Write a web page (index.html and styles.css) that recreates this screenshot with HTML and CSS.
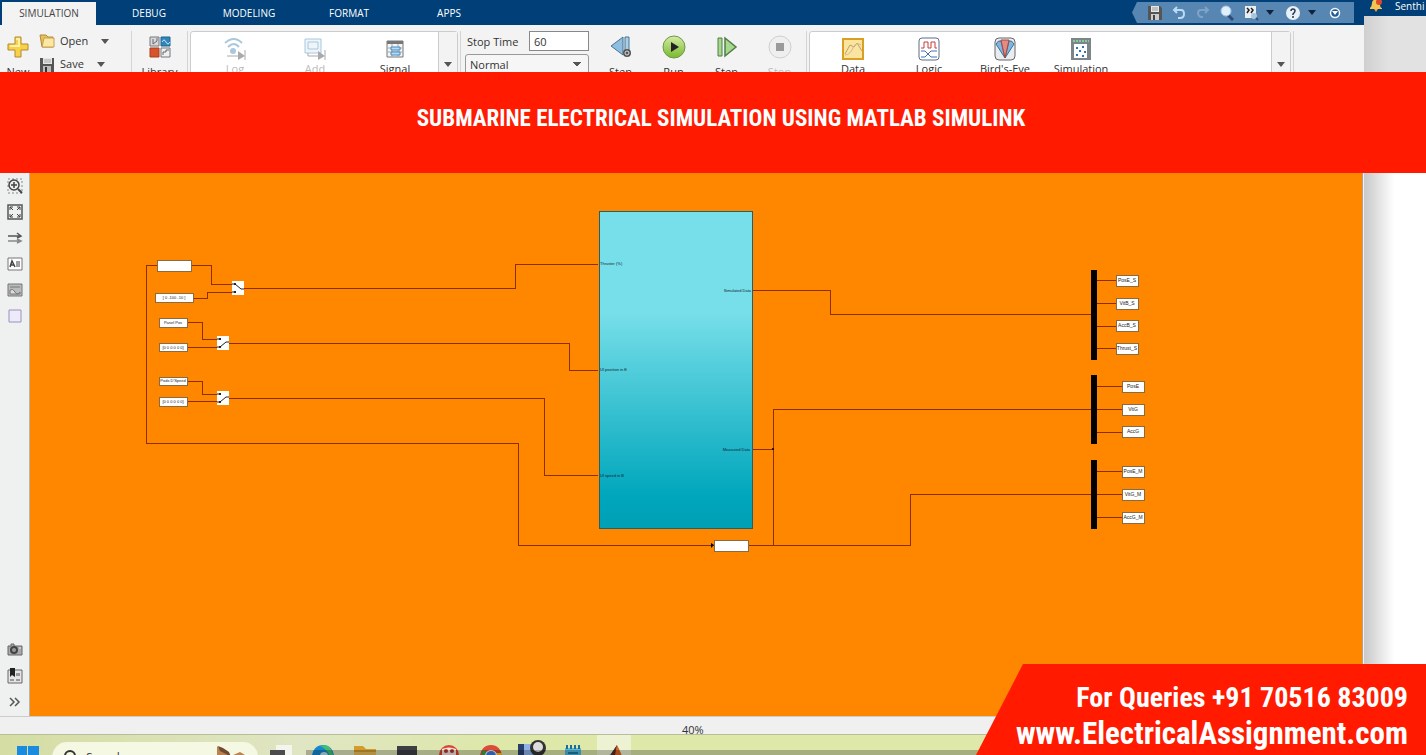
FILE: index.html
```html
<!DOCTYPE html>
<html lang="en">
<head>
  <meta charset="UTF-8" />
  <meta name="viewport" content="width=device-width, initial-scale=1.0"/>
  <title>Submarine Electrical Simulation</title>
  <link rel="stylesheet" href="styles.css">
</head>
<body>

  <div class="desktop">
    <div class="app-window">

      <!-- Ribbon tabs -->
      <header class="tab-bar">
        <nav class="tabs">
          <button class="tab active">SIMULATION</button>
          <button class="tab">DEBUG</button>
          <button class="tab">MODELING</button>
          <button class="tab">FORMAT</button>
          <button class="tab">APPS</button>
        </nav>
        <div class="quick-access">
          <button aria-label="Save"><svg width="16" height="16" viewBox="0 0 16 16"><path d="M1 1h12l2 2v12H1z" fill="#555"/><path d="M4 1h8v6H4z" fill="#e8e8e8"/><path d="M5 3h6M5 5h6" stroke="#999"/><path d="M4 9h8v6H4z" fill="#ccc"/><path d="M6 10h2v5H6z" fill="#444"/></svg></button>
          <button aria-label="Undo"><svg width="16" height="16" viewBox="0 0 16 16" fill="none" stroke="#b9dcf5" stroke-width="2"><path d="M6 2L3 5l3 3M3 5h7q3 0 3 4t-4 4H7"/></svg></button>
          <button aria-label="Redo"><svg width="16" height="16" viewBox="0 0 16 16" fill="none" stroke="#7fa3c4" stroke-width="2"><path d="M10 2l3 3-3 3M13 5H6Q3 5 3 8t3 4h2"/></svg></button>
          <button aria-label="Find"><svg width="16" height="16" viewBox="0 0 16 16"><path d="M9 10l5 5" stroke="#2b4d77" stroke-width="3"/><circle cx="7" cy="6" r="5" fill="#dff0fc" stroke="#9cc4e4"/></svg></button>
          <button aria-label="Favorites"><svg width="16" height="16" viewBox="0 0 16 16"><path d="M2 1h11v12H2z" fill="#e9eef2"/><path d="M4 3l2 2-2 3M8 3l2 2-2 3" fill="none" stroke="#222" stroke-width="1.5"/><circle cx="11" cy="11" r="3" fill="#a9c6de"/><path d="M13 13l2 2" stroke="#33557d" stroke-width="2"/></svg></button>
          <span class="caret dark"></span>
          <button aria-label="Help"><svg width="16" height="16" viewBox="0 0 16 16"><circle cx="8" cy="8" r="7" fill="#e9f1f8"/><path d="M6 6q0-2 2-2t2 2q0 1-2 3v1M8 11v2" fill="none" stroke="#223a55" stroke-width="1.5"/></svg></button>
          <span class="caret dark"></span>
          <button aria-label="Minimize ribbon"><svg width="16" height="16" viewBox="0 0 16 16"><circle cx="8" cy="8" r="4.5" fill="#235a90" stroke="#eef6fc" stroke-width="1.5"/><path d="M5 6h6l-3 4z" fill="#fff"/></svg></button>
        </div>
      </header>

      <!-- Toolstrip -->
      <div class="toolstrip">
        <div class="file-group">
          <button class="tool new-tool">
            <svg width="22" height="22" viewBox="0 0 22 22"><path d="M8 1h6v7h7v6h-7v7H8v-7H1V8h7z" fill="#f8d04a" stroke="#b18a2a"/><path d="M9 3h3v7H3" fill="none" stroke="#fff0a8" stroke-width="2"/></svg>
            <span>New</span>
          </button>
          <div class="file-actions">
            <button class="file-action">
              <svg width="16" height="14" viewBox="0 0 16 14"><path d="M1 1h6l2 2h5v10H3z" fill="#e7c05b" stroke="#b48a35"/><path d="M5 4h10v9H3z" fill="#fbe8a5" stroke="#c7a04d"/></svg>
              <span>Open</span><i class="caret"></i>
            </button>
            <button class="file-action">
              <svg width="16" height="15" viewBox="0 0 16 15"><path d="M1 1h14v14H1z" fill="#555"/><path d="M4 1h9v6H4z" fill="#e6e6e6"/><path d="M5 3h7M5 5h7" stroke="#aaa"/><path d="M4 9h8v6H4z" fill="#bbb"/><path d="M6 10h2v5H6z" fill="#333"/></svg>
              <span>Save</span><i class="caret"></i>
            </button>
          </div>
        </div>

        <div class="library-group">
          <button class="tool">
            <svg width="22" height="22" viewBox="0 0 22 22"><path d="M1 1h9v9H1z" fill="#d7dadd" stroke="#777"/><path d="M4 3v5M4 8l4-3V2" stroke="#666" fill="none"/><path d="M12 1h9v9h-9z" fill="#2f86bd" stroke="#24658f"/><path d="M13 6q2-4 4 0t4 0" stroke="#c9e7fa" fill="none"/><path d="M1 12h9v9H1z" fill="#d6532c" stroke="#a8401f"/><path d="M12 12h9v9h-9z" fill="#eef0f2" stroke="#777"/><path d="M14 19v-3h3v-2h3" stroke="#666" fill="none"/></svg>
            <span>Library</span>
          </button>
        </div>

        <div class="gallery prepare">
          <button class="tool" disabled>
            <svg width="24" height="24" viewBox="0 0 24 24" fill="none" stroke="#a9c8dc" stroke-width="2"><path d="M2 6q9-8 17 0M5 10q6-6 11 0"/><circle cx="10" cy="14" r="3" fill="#a9c8dc" stroke="none"/><path d="M4 19h13M22 13v10" stroke="#aaa" stroke-width="1"/><path d="M15 14l7 5-7 4z" fill="#aaa" stroke="none"/></svg>
            <span>Log</span>
          </button>
          <button class="tool" disabled>
            <svg width="24" height="24" viewBox="0 0 24 24" fill="none" stroke="#a9c8dc"><path d="M2 2h16v14H2z" fill="#eef5fa"/><path d="M5 5h10v7H5z"/><path d="M5 16v3h11M22 13v10" stroke="#aaa"/><path d="M15 14l7 5-7 4z" fill="#aaa" stroke="none"/></svg>
            <span>Add</span>
          </button>
          <button class="tool">
            <svg width="24" height="24" viewBox="0 0 24 24"><path d="M4 4h16v16H4z" fill="#f5f5f5" stroke="#777"/><path d="M4 4h16v3H4z" fill="#777"/><path d="M4 11h16M4 15h16M9 7v13M15 7v13" stroke="#aaa"/><path d="M8 10h9v3H8zM8 15h9v3H8z" fill="#b9dcf5" stroke="#4489bd"/></svg>
            <span>Signal</span>
          </button>
          <button class="gallery-more" aria-label="More prepare tools"><i class="caret"></i></button>
        </div>

        <div class="simulate-group">
          <div class="sim-settings">
            <div class="stop-time">
              <label for="stop-time">Stop Time</label>
              <input type="text" id="stop-time" value="60">
            </div>
            <select id="sim-mode" aria-label="Simulation mode">
              <option>Normal</option>
            </select>
          </div>
          <button class="tool">
            <svg width="24" height="24" viewBox="0 0 24 24"><path d="M14 2v18L2 11z" fill="#8dbde0" stroke="#4a7391"/><path d="M16 2h4v16h-4z" fill="#a9cfe9" stroke="#4a7391"/><circle cx="18" cy="18" r="4" fill="#555"/><circle cx="18" cy="18" r="2" fill="none" stroke="#ddd"/></svg>
            <span>Step</span>
          </button>
          <button class="tool">
            <svg width="24" height="24" viewBox="0 0 24 24"><defs><linearGradient id="run-green" x2="0" y2="1"><stop stop-color="#d5eca6"/><stop offset="1" stop-color="#78b82e"/></linearGradient></defs><circle cx="12" cy="12" r="11" fill="url(#run-green)" stroke="#6f9843"/><path d="M9 7l8 5-8 5z" fill="#222"/></svg>
            <span>Run</span>
          </button>
          <button class="tool">
            <svg width="24" height="24" viewBox="0 0 24 24" fill="#a6d890" stroke="#527d45"><path d="M3 3h4v18H3z"/><path d="M10 3v18l11-9z" stroke-width="1.5"/></svg>
            <span>Step</span>
          </button>
          <button class="tool" disabled>
            <svg width="24" height="24" viewBox="0 0 24 24"><circle cx="12" cy="12" r="11" fill="#efefef" stroke="#cfcfcf"/><path d="M8 8h8v8H8z" fill="#9a9a9a"/></svg>
            <span>Stop</span>
          </button>
        </div>

        <div class="gallery review">
          <button class="tool">
            <svg width="24" height="24" viewBox="0 0 24 24"><path d="M2 2h20v20H2z" fill="#fbe3a0" stroke="#d9a022" stroke-width="2"/><path d="M4 17l5-9 4 2 3-4 5 8" fill="none" stroke="#c1a262"/><path d="M4 18q5 0 8-7t8-3" fill="none" stroke="#cdbb92"/></svg>
            <span>Data</span>
          </button>
          <button class="tool">
            <svg width="24" height="24" viewBox="0 0 24 24" fill="none"><rect x="2" y="1" width="20" height="22" rx="3" fill="#fff" stroke="#5c6c8c"/><path d="M4 11h3V5h4v6h3V5h4v6h2" stroke="#c83a3a"/><path d="M4 14h4l6 6h6M4 20h4l6-6h6" stroke="#4072b5"/></svg>
            <span>Logic</span>
          </button>
          <button class="tool">
            <svg width="24" height="24" viewBox="0 0 24 24"><rect x="2" y="1" width="20" height="22" rx="4" fill="#e9edf0" stroke="#666"/><path d="M12 21L3 7q2-4 5-3zM12 21l9-14q-2-4-5-3z" fill="#7fb6dd" stroke="#3d6f96"/><path d="M12 21L8 3h8z" fill="#e58b83" stroke="#a9473f"/></svg>
            <span>Bird's-Eye</span>
          </button>
          <button class="tool">
            <svg width="24" height="24" viewBox="0 0 24 24"><path d="M2 1h20v22H2z" fill="#7d8589"/><path d="M5 7h13v14H5z" fill="#fff"/><path d="M4 4h16" stroke="#7fd09a" stroke-width="2" stroke-dasharray="2 1"/><path d="M7 10h2v2H7zM13 9h2v2h-2zM10 13h2v2h-2zM15 14h2v2h-2zM7 17h2v2H7zM13 18h2v2h-2z" fill="#2e75b8"/></svg>
            <span>Simulation</span>
          </button>
          <button class="gallery-more" aria-label="More result tools"><i class="caret"></i></button>
        </div>
        <div class="strip-end"></div>
      </div>

      <!-- Palette and model canvas -->
      <main class="workspace">
        <aside class="palette">
          <button aria-label="Zoom"><svg width="16" height="16" viewBox="0 0 16 16" fill="none" stroke="#444"><path d="M1 1h14v14H1z" stroke="#888" stroke-dasharray="2 2"/><circle cx="7" cy="7" r="5" fill="#eee" stroke-width="1.5"/><path d="M11 11l4 4" stroke-width="2"/><path d="M4 7h6M7 4v6" stroke-width="1.5"/></svg></button>
          <button aria-label="Fit to view"><svg width="16" height="16" viewBox="0 0 16 16" fill="none" stroke="#444"><path d="M1 1h14v14H1z" stroke="#555" stroke-width="1.5"/><path d="M3 6V3h3M10 3h3v3M13 10v3h-3M6 13H3v-3M3 3l3 3M13 3l-3 3M13 13l-3-3M3 13l3-3"/></svg></button>
          <button aria-label="Signal routing"><svg width="16" height="16" viewBox="0 0 16 16" fill="none" stroke="#555" stroke-width="1.5"><path d="M1 6h12M10 3l4 3-4 2"/><path d="M1 11h12M10 9l4 2-4 2" stroke="#888"/></svg></button>
          <button aria-label="Annotation"><svg width="16" height="16" viewBox="0 0 16 16" fill="none" stroke="#444"><path d="M1 2h14v12H1z" fill="#fff" stroke="#777"/><path d="M3 11l2-6 3 6M4 9h3" stroke-width="1.5"/><path d="M9 6h4M9 8h4M9 10h4"/></svg></button>
          <button aria-label="Image"><svg width="16" height="16" viewBox="0 0 16 16"><path d="M1 2h14v12H1z" fill="#bbb" stroke="#777"/><path d="M3 5h10" stroke="#777"/><path d="M3 8q3-2 5 2t5 0v2H3z" fill="#ddd" stroke="#777"/></svg></button>
          <button aria-label="Area"><svg width="16" height="16" viewBox="0 0 16 16"><path d="M2 2h12v12H2z" fill="#edeafa" stroke="#9a90c0"/></svg></button>
          <button class="palette-bottom" aria-label="Screenshot"><svg width="16" height="16" viewBox="0 0 16 16"><path d="M1 4h3V2h3v2h8v9H1z" fill="#aaa" stroke="#666"/><circle cx="7" cy="8" r="4" fill="#444"/><circle cx="7" cy="8" r="2" fill="#999"/><path d="M12 6h2" stroke="#eee"/></svg></button>
          <button aria-label="Model browser"><svg width="16" height="16" viewBox="0 0 16 16"><path d="M1 2h14v13H1z" fill="#e5e5e5" stroke="#666"/><path d="M9 5h4v3H9zM3 11h4v2H3zM9 11h4v2H9z" fill="#999"/><path d="M3 0h5v9L5 7 3 9z" fill="#222"/></svg></button>
          <button aria-label="Expand palette"><svg width="16" height="16" viewBox="0 0 16 16" fill="none" stroke="#555" stroke-width="1.5"><path d="M3 4l4 4-4 4M8 4l4 4-4 4"/></svg></button>
        </aside>

        <div class="canvas">
          <svg class="model" viewBox="30 173 1332 543" preserveAspectRatio="xMinYMin">
            <defs>
              <linearGradient id="plant-fill" x2="0" y2="1">
                <stop offset="0.32" stop-color="#77dfe9"/>
                <stop offset="0.9" stop-color="#00a6bc"/>
                <stop offset="1" stop-color="#00a0b6"/>
              </linearGradient>
              <g id="switch">
                <path class="switch-box" d="M0 0h12v14H0z"/>
                <path class="switch-arm" d="M0 3h4M0 11h3l6-5h3"/>
                <circle cx="3" cy="3" r="1"/><circle cx="3" cy="11" r="1"/>
              </g>
              <g id="switch-up">
                <path class="switch-box" d="M0 0h12v14H0z"/>
                <path class="switch-arm" d="M0 11h4M0 3h3l6 5h3"/>
                <circle cx="3" cy="3" r="1"/><circle cx="3" cy="11" r="1"/>
              </g>
            </defs>

            <!-- Signal lines -->
            <g class="wires">
              <path d="M157 265H146V443H518V545H714"/>
              <path d="M191 265H211V284H233"/>
              <path d="M193 298H207V292H233"/>
              <path d="M244 288H515V264H598"/>
              <path d="M187 322H202V339H218"/>
              <path d="M187 347H218"/>
              <path d="M229 343H569V370H598"/>
              <path d="M187 381H202V394H218"/>
              <path d="M187 401H218"/>
              <path d="M229 398H544V475H598"/>
              <path d="M752 290H830V314H1091"/>
              <path d="M752 449H773"/>
              <path d="M1091 409H773V545"/>
              <path d="M748 545H910V494H1091"/>
              <path d="M1097 280H1116M1097 303H1116M1097 326H1116M1097 348H1116"/>
              <path d="M1097 386H1122M1097 409H1122M1097 432H1122"/>
              <path d="M1097 471H1122M1097 494H1122M1097 517H1122"/>
            </g>
            <circle cx="773" cy="449" r="1"/>
            <path d="M711 543l3 2-3 3z"/>

            <!-- Subsystem -->
            <path class="plant" d="M599 211h153v317H599z"/>
            <g class="port">
              <text x="600" y="265">Thruster (%)</text>
              <text x="600" y="371">UI position in E</text>
              <text x="600" y="477">UI speed in B</text>
              <text class="port-out" x="751" y="292">Simulated Data</text>
              <text class="port-out" x="750" y="451">Measured Data</text>
            </g>

            <!-- Sources -->
            <g class="block">
              <path d="M157 260h34v11h-34z"/>
              <path d="M155 293h38v9h-38z"/>
              <path d="M159 318h28v9h-28z"/>
              <path d="M159 343h28v8h-28z"/>
              <path d="M159 377h28v8h-28z"/>
              <path d="M159 397h28v9h-28z"/>
              <path d="M714 540h34v11h-34z"/>
            </g>
            <g class="block-label">
              <text x="174" y="299">[ 0 -100 -10 ]</text>
              <text x="173" y="324">Panel Pos</text>
              <text x="173" y="349">[0 0 0 0 0 0]</text>
              <text x="173" y="382">Pods D'Speed</text>
              <text x="173" y="403">[0 0 0 0 0 0]</text>
            </g>
            <use href="#switch-up" x="232" y="281"/>
            <use href="#switch" x="217" y="336"/>
            <use href="#switch" x="217" y="391"/>

            <!-- Bus selectors and sinks -->
            <path d="M1091 270h6v90h-6zM1091 375h6v69h-6zM1091 460h6v69h-6z"/>
            <g class="block">
              <path d="M1116 275h22v11h-22z"/>
              <path d="M1116 298h22v11h-22z"/>
              <path d="M1116 320h22v11h-22z"/>
              <path d="M1116 343h22v11h-22z"/>
              <path d="M1122 381h22v11h-22z"/>
              <path d="M1122 404h22v11h-22z"/>
              <path d="M1122 426h22v11h-22z"/>
              <path d="M1122 466h22v11h-22z"/>
              <path d="M1122 489h22v11h-22z"/>
              <path d="M1122 512h22v11h-22z"/>
            </g>
            <g class="block-label sink">
              <text x="1127" y="282">PosE_S</text>
              <text x="1127" y="305">VitB_S</text>
              <text x="1127" y="327">AccB_S</text>
              <text x="1127" y="350">Thrust_S</text>
              <text x="1133" y="388">PosE</text>
              <text x="1133" y="411">VitG</text>
              <text x="1133" y="433">AccG</text>
              <text x="1133" y="473">PosE_M</text>
              <text x="1133" y="496">VitG_M</text>
              <text x="1133" y="519">AccG_M</text>
            </g>
          </svg>
        </div>
      </main>

      <footer class="status-bar">40%</footer>
    </div>

    <!-- Window partly covered on the right -->
    <div class="back-window">
      <div class="back-title">
        <svg width="14" height="16" viewBox="0 0 14 16"><path d="M1 10q2-2 2-5t4-4q4 1 4 5t2 4v1H1z" fill="#f5c451"/><path d="M5 11h4l-2 3z" fill="#e8a93a"/><circle cx="10" cy="4" r="3" fill="#df4a2e"/></svg>
        <span>Senthi</span>
      </div>
      <div class="back-toolbar"></div>
      <div class="back-body"></div>
    </div>
  </div>

  <!-- Taskbar -->
  <div class="taskbar">
    <button class="task start" aria-label="Start"><svg width="22" height="22" viewBox="0 0 22 22" fill="#1b8be0"><path d="M0 0h10v10H0zM11 0h11v10H11zM0 11h10v11H0zM11 11h11v11H11z"/></svg></button>
    <div class="search">
      <svg width="16" height="16" viewBox="0 0 16 16" fill="none" stroke="#333" stroke-width="2"><circle cx="8" cy="7" r="5"/><path d="M4 11l-3 4"/></svg>
      <input type="search" aria-label="Search" placeholder="Search">
      <svg width="30" height="22" viewBox="0 0 30 22"><path d="M1 0l4 3 6 2 4 5 9-4 5 3-1 12H10L5 11 1 12z" fill="#b98253"/><path d="M2 0l5 2 6 4 2 5-5-3-6-3z" fill="#6d4a30"/></svg>
    </div>
    <button class="task" aria-label="Task view"><svg width="22" height="22" viewBox="0 0 22 22"><path d="M6 0h16v14H6z" fill="#f5f5f0"/><path d="M0 5h15v15H0z" fill="#4c4c4c"/></svg></button>
    <button class="task" aria-label="Edge"><svg width="22" height="22" viewBox="0 0 22 22"><circle cx="11" cy="11" r="11" fill="#1688cf"/><path d="M8 1q10-3 13 8 0 4-3 4Q16 4 8 1z" fill="#43c06f"/><circle cx="12" cy="11" r="4" fill="#b8e4ef"/></svg></button>
    <button class="task" aria-label="File Explorer"><svg width="24" height="22" viewBox="0 0 24 22"><path d="M1 1h9l3 3h10v18H1z" fill="#d39c2c"/><path d="M1 7h22v15H1z" fill="#ebc05d"/></svg></button>
    <button class="task" aria-label="Terminal"><svg width="20" height="22" viewBox="0 0 20 22"><path d="M0 1h20v20H0z" fill="#3d3f45"/></svg></button>
    <button class="task" aria-label="Messenger"><svg width="20" height="22" viewBox="0 0 20 22"><circle cx="10" cy="10" r="10" fill="#d94731"/><path d="M3 4q7-3 14 0v6H3z" fill="#fbe6dc"/><circle cx="7" cy="6" r="2" fill="#b9352b"/><circle cx="13" cy="6" r="2" fill="#b9352b"/></svg></button>
    <button class="task" aria-label="Chrome"><svg width="22" height="22" viewBox="0 0 22 22"><circle cx="11" cy="11" r="11" fill="#dc4b38"/><path d="M1 7l7 12h4L5 5z" fill="#37a853"/><path d="M13 8h9q0 8-6 12z" fill="#f5c733"/><circle cx="11" cy="11" r="6" fill="#fff"/><circle cx="11" cy="11" r="5" fill="#3f7fe0"/></svg></button>
    <button class="task recorder" aria-label="Recorder"><svg width="28" height="24" viewBox="0 0 28 24"><path d="M0 4h12v20H0z" fill="#27416e"/><path d="M6 4h10v20H6z" fill="#8eb3e6"/><circle cx="20" cy="8" r="8" fill="#333"/><circle cx="20" cy="7" r="5" fill="#ddd"/></svg></button>
    <button class="task" aria-label="Notepad"><svg width="18" height="22" viewBox="0 0 18 22"><path d="M1 3h16v19H1z" fill="#56b9dc"/><path d="M3 0v4M7 0v4M11 0v4M15 0v4" stroke="#1b6e92" stroke-width="2"/><path d="M4 8h10" stroke="#1f7da5" stroke-width="2"/></svg></button>
    <button class="task current" aria-label="MATLAB"><svg width="22" height="22" viewBox="0 0 22 22"><path d="M1 13l7-4 6-9-4 17z" fill="#3c6f9f"/><path d="M14 0q3 5 6 14l-5-1-6 5z" fill="#d9642a"/><path d="M14 0L8 9l3 6z" fill="#5a2b1f"/></svg></button>
    <div class="taskbar-shade"></div>
  </div>

  <!-- Video captions -->
  <h1 class="title-banner">SUBMARINE ELECTRICAL SIMULATION USING MATLAB SIMULINK</h1>
  <div class="contact-banner">
    <p>For Queries +91 70516 83009</p>
    <p class="website"><a href="#">www.ElectricalAssignment.com</a></p>
  </div>

</body>
</html>
```

FILE: styles.css
```css
* {
  margin: 0;
  padding: 0;
  box-sizing: border-box;
}

body {
  height: 100vh;
  display: flex;
  flex-direction: column;
  position: relative;
  overflow: hidden;
  font-family: "Open Sans", "Noto Sans", sans-serif;
  font-size: 11px;
  color: #333;
}

button {
  border: none;
  background: none;
  font: inherit;
  color: inherit;
}

svg {
  display: block;
  flex-shrink: 0;
}

.desktop {
  flex: 1;
  min-height: 0;
  display: flex;
}

.app-window {
  flex: 1;
  min-width: 0;
  display: flex;
  flex-direction: column;
  background-color: #f3f3f3;
}

/* Ribbon tabs */
.tab-bar {
  height: 25px;
  display: flex;
  justify-content: space-between;
  padding: 2px 10px 0 2px;
  background-color: #003f77;
}

.tabs {
  display: flex;
}

.tab {
  width: 100px;
  padding-bottom: 1px;
  color: #fff;
  font-size: 10px;
}

.tab.active {
  width: 94px;
  margin-right: 3px;
  background-color: #f3f3f3;
  color: #444;
}

.quick-access {
  height: 21px;
  display: flex;
  align-items: center;
  gap: 8px;
  padding: 0 11px 0 15px;
  background-color: #5886b2;
  clip-path: polygon(5px 0, 100% 0, 100% 100%, 5px 100%, 0 50%);
}

.caret {
  border: 4px solid transparent;
  border-top: 5px solid #555;
  border-bottom: none;
}

.caret.dark {
  margin: 0 3px 0 -1px;
  border-top-color: #10233b;
}

/* Toolstrip */
.toolstrip {
  height: 148px;
  display: flex;
  align-items: flex-start;
  padding-top: 6px;
}

.tool {
  display: flex;
  flex-direction: column;
  align-items: center;
  font-size: 11px;
  line-height: 16px;
}

.tool:disabled {
  color: #bbb;
}

.file-group {
  width: 132px;
  height: 80px;
  display: flex;
  padding-left: 2px;
  border-right: 1px solid #d4d4d4;
}

.new-tool {
  width: 32px;
  gap: 6px;
  padding-top: 5px;
}

.file-actions {
  display: flex;
  flex-direction: column;
  gap: 7px;
  padding: 2px 0 0 5px;
}

.file-action {
  display: flex;
  align-items: center;
  gap: 5px;
  font-size: 11px;
  line-height: 16px;
}

.file-action .caret {
  margin-left: 8px;
}

.library-group {
  width: 56px;
  height: 80px;
  display: flex;
  justify-content: center;
  padding-top: 5px;
  margin-right: 2px;
  border-right: 1px solid #d4d4d4;
}

.library-group .tool {
  gap: 6px;
}

.gallery {
  height: 84px;
  display: flex;
  background-color: #fff;
  border: 1px solid #ccc;
  border-radius: 3px;
}

.gallery .tool {
  padding-top: 5px;
}

.gallery-more {
  width: 19px;
  margin-left: auto;
  display: flex;
  justify-content: center;
  padding-top: 30px;
  background-color: #f3f3f3;
  border-left: 1px solid #ccc;
}

.prepare {
  width: 268px;
  padding-left: 4px;
}

.prepare .tool {
  width: 80px;
}

.simulate-group {
  height: 80px;
  display: flex;
  margin-left: 2px;
  padding-left: 4px;
  border-left: 1px solid #d4d4d4;
  border-right: 1px solid #d4d4d4;
}

.sim-settings {
  width: 124px;
  margin-right: 5px;
}

.stop-time {
  display: flex;
  align-items: center;
  justify-content: space-between;
  padding-left: 2px;
}

.stop-time input {
  width: 60px;
  height: 20px;
  padding-left: 4px;
  border: 1px solid #888;
  font: inherit;
  color: inherit;
}

.sim-settings select {
  width: 124px;
  height: 21px;
  margin-top: 3px;
  padding-left: 4px;
  appearance: none;
  border: 1px solid #999;
  border-radius: 3px;
  background-color: #f6f6f6;
  background-image: linear-gradient(to bottom right, #555 50%, transparent 50%), linear-gradient(to bottom left, #555 50%, transparent 50%);
  background-repeat: no-repeat;
  background-size: 4px 5px;
  background-position: right 7px center, right 11px center;
  font: inherit;
  color: inherit;
}

.simulate-group .tool {
  width: 53px;
  gap: 5px;
  padding-top: 4px;
}

.review {
  flex: 1;
  margin-left: 2px;
  padding-left: 5px;
}

.review .tool {
  width: 76px;
}

.strip-end {
  width: 71px;
  height: 80px;
  margin-left: 2px;
  border-left: 1px solid #d4d4d4;
}

/* Workspace */
.workspace {
  flex: 1;
  min-height: 0;
  display: flex;
}

.palette {
  width: 30px;
  display: flex;
  flex-direction: column;
  align-items: center;
  gap: 10px;
  padding: 5px 0 6px;
  background-color: #eff0f0;
  border-right: 1px solid #b5b5b5;
}

.palette-bottom {
  margin-top: auto;
}

.canvas {
  flex: 1;
  min-width: 0;
  margin-right: 1px;
  background-color: #ff8700;
  border-right: 1px solid #b0a090;
}

.model {
  width: 100%;
  height: 100%;
}

.wires path {
  fill: none;
  stroke: #8a3000;
  shape-rendering: crispEdges;
}

.plant {
  fill: url(#plant-fill);
  stroke: #23606b;
  shape-rendering: crispEdges;
}

.port text {
  font-family: "Liberation Sans", sans-serif;
  font-size: 4px;
  fill: #123;
}

.port .port-out {
  text-anchor: end;
}

.block path {
  fill: #fff;
  stroke: #8b6a40;
  shape-rendering: crispEdges;
}

.block-label text {
  font-family: "Liberation Sans", sans-serif;
  font-size: 4px;
  text-anchor: middle;
  fill: #222;
}

.block-label.sink text {
  font-size: 5px;
}

.switch-box {
  fill: #fff;
}

.switch-arm {
  fill: none;
  stroke: #222;
}

.status-bar {
  height: 18px;
  padding: 5px 0 0 682px;
  background-color: #f0f0f0;
  border-top: 1px solid #ccc;
  font-size: 11px;
  line-height: 16px;
}

/* Window behind */
.back-window {
  width: 62px;
  display: flex;
  flex-direction: column;
  overflow: hidden;
  background-color: #fff;
}

.back-title {
  height: 16px;
  display: flex;
  align-items: center;
  gap: 12px;
  padding: 0 0 4px 5px;
  background-color: #003f77;
  color: #fff;
  font-size: 10px;
}

.back-toolbar {
  height: 100px;
  background: linear-gradient(to right, #cfcfcf, #e2e2e2 24px);
}

.back-body {
  flex: 1;
  background: linear-gradient(to right, #c8c8c8, #fff 30px);
}

/* Taskbar */
.taskbar {
  height: 21px;
  display: flex;
  align-items: flex-start;
  position: relative;
  overflow: hidden;
  padding: 0 16px;
  background: linear-gradient(to right, #d5dda4, #e0e5c3 300px, #dde8a9 500px);
  border-top: 1px solid #b9bd98;
}

.task {
  width: 42px;
  height: 21px;
  display: flex;
  justify-content: center;
  padding-top: 10px;
}

.task.start {
  width: 24px;
  padding-top: 11px;
}

.search {
  width: 206px;
  height: 30px;
  display: flex;
  align-items: center;
  gap: 8px;
  margin: 7px 2px 0 12px;
  padding: 0 12px 0 10px;
  background-color: #f5f8e2;
  border-radius: 15px;
}

.search input {
  flex: 1;
  min-width: 0;
  border: none;
  background: none;
  font: inherit;
  font-size: 12px;
}

.search input::placeholder {
  color: #444;
}

.task.recorder {
  width: 40px;
  padding-top: 5px;
}

.task.current {
  width: 34px;
  margin-left: 3px;
  background-color: #edf3d2;
}

.taskbar-shade {
  position: absolute;
  left: 306px;
  right: 330px;
  bottom: 0;
  height: 5px;
  background-color: rgba(0, 0, 0, 0.25);
}

/* Captions laid over the desktop */
.title-banner {
  position: absolute;
  top: 72px;
  left: 0;
  right: 0;
  height: 101px;
  padding: 30px 0 0 16px;
  background-color: #ff1a00;
  color: #fff;
  font-family: "Roboto Condensed", "Liberation Sans Narrow", Roboto, sans-serif;
  font-size: 23px;
  font-weight: 700;
  line-height: 34px;
  text-align: center;
}

.contact-banner {
  position: absolute;
  right: 0;
  bottom: 0;
  width: 450px;
  height: 91px;
  padding: 16px 18px 0 0;
  background-color: #ff1a00;
  clip-path: polygon(47px 0, 100% 0, 100% 100%, 0 100%);
  color: #fff;
  font-family: "Roboto Condensed", "Liberation Sans Narrow", Roboto, sans-serif;
  font-size: 28px;
  font-weight: 700;
  line-height: 36px;
  text-align: right;
}

.contact-banner .website {
  font-size: 31px;
}

.contact-banner a {
  color: inherit;
  text-decoration: none;
}
```
